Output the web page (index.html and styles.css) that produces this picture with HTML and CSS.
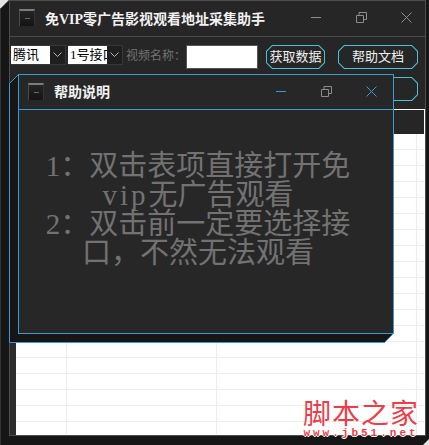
FILE: index.html
```html
<!DOCTYPE html>
<html lang="zh">
<head>
<meta charset="utf-8">
<title>免VIP零广告影视观看地址采集助手</title>
<link rel="stylesheet" href="styles.css">
</head>
<body>
<div class="app">
  <div class="panel">
    <div class="titlebar">
      <span class="appicon"><span class="appicon-dash"></span></span>
      <span class="title">免VIP零广告影视观看地址采集助手</span>
      <span class="controls">
        <svg width="11" height="11" viewBox="0 0 11 11"><path d="M0 5.5H10" stroke="#8c8c8c"/></svg>
        <svg width="11" height="11" viewBox="0 0 11 11" fill="none" stroke="#8c8c8c"><path d="M.5 3.5h7v7h-7zM3 3V.5h7.5v7H8"/></svg>
        <svg width="11" height="11" viewBox="0 0 11 11"><path d="M.5.5l10 10M10.5.5l-10 10" stroke="#8c8c8c"/></svg>
      </span>
    </div>
    <div class="toolbar">
      <div class="combo"><span class="combo-value">腾讯</span><span class="combo-arrow"><svg width="9" height="6" viewBox="0 0 9 6"><path d="M.5.5l4 4 4-4" fill="none" stroke="#b5b5b5"/></svg></span></div>
      <div class="combo"><span class="combo-value">1号接口</span><span class="combo-arrow"><svg width="9" height="6" viewBox="0 0 9 6"><path d="M.5.5l4 4 4-4" fill="none" stroke="#b5b5b5"/></svg></span></div>
      <span class="label">视频名称：</span>
      <span class="textbox"></span>
      <span class="btn btn-small"><span class="btn-face">获取数据</span></span>
      <span class="btn btn-wide"><span class="btn-face">帮助文档</span></span>
    </div>
    <div class="row2">
      <span class="btn btn-wide"><span class="btn-face"></span></span>
    </div>
    <div class="grid">
      <div class="grid-head"></div>
      <div class="grid-body"></div>
    </div>
  </div>

  <div class="mark">
    <div class="mark-cn">脚本之家</div>
    <div class="mark-en">www.jb51.net</div>
  </div>

  <div class="help">
    <svg class="help-bevel" width="385" height="269" viewBox="0 0 385 269"><path d="M.5 9.5l9-9h375v259l-9 9H.5z" fill="#161616" stroke="#3d9ad1"/></svg>
    <div class="help-window">
      <div class="help-titlebar">
        <span class="appicon"><span class="appicon-dash"></span></span>
        <span class="title">帮助说明</span>
        <span class="help-controls">
          <svg width="11" height="11" viewBox="0 0 11 11"><path d="M0 5.5H10" stroke="#3d9ad1"/></svg>
          <svg width="11" height="11" viewBox="0 0 11 11" fill="none" stroke="#8c8c8c"><path d="M.5 3.5h7v7h-7zM3 3V.5h7.5v7H8"/></svg>
          <svg width="11" height="11" viewBox="0 0 11 11"><path d="M.5.5l10 10M10.5.5l-10 10" stroke="#3d9ad1"/></svg>
        </span>
      </div>
      <div class="help-text">1：双击表项直接打开免<span class="latin">vip</span>无广告观看<br>2：双击前一定要选择接口，不然无法观看</div>
    </div>
  </div>
</div>
</body>
</html>
```
FILE: styles.css
```css
* { box-sizing: border-box; }
html, body { margin: 0; padding: 0; background: #e4e4e4; }
body { font-family: "Liberation Serif", "Noto Sans CJK SC", serif; }

.app {
  position: relative;
  width: 429px;
  height: 445px;
  padding: 0 3px 9px 8px;
  background: #161616;
  border-left: 1px solid #333;
  clip-path: polygon(9px 0, 429px 0, 429px 439px, 423px 445px, 0 445px, 0 9px);
}
.panel {
  height: 100%;
  display: flex;
  flex-direction: column;
  background: #2c2c2c;
  border: 1px solid #4d4d4d;
}
.titlebar {
  flex: none;
  height: 36px;
  display: flex;
  align-items: center;
  padding: 0 0 2px 9px;
  background: #262626;
  border-bottom: 1px solid #4a4a4a;
}
.appicon {
  flex: none;
  width: 16px;
  height: 17px;
  display: flex;
  align-items: center;
  justify-content: center;
  background: linear-gradient(#242424, #141414);
  border-top: 2px solid #7c7c7c;
  border-left: 1px solid #4a4a4a;
  border-right: 1px solid #333;
}
.appicon-dash { width: 5px; height: 1px; background: #6a6a6a; }
.title {
  margin-left: 10px;
  font-size: 14px;
  font-weight: 700;
  color: #f2f2f2;
  white-space: nowrap;
}
.controls {
  margin-left: auto;
  display: flex;
  gap: 34px;
  padding-right: 13px;
}
.toolbar {
  flex: none;
  height: 38px;
  display: flex;
  align-items: flex-start;
  padding: 8px 0 0 1px;
  background: #262626;
}
.combo {
  flex: none;
  width: 55px;
  height: 20px;
  margin-right: 2px;
  display: flex;
  border: 1px solid #383838;
  border-left: 0;
}
.combo-value {
  flex: none;
  width: 39px;
  background: #fff;
  color: #000;
  font-size: 13px;
  line-height: 18px;
  padding-left: 2px;
  overflow: hidden;
  white-space: nowrap;
}
.combo-arrow {
  flex: 1;
  display: flex;
  align-items: center;
  justify-content: center;
  background: #1f1f1f;
}
.label {
  margin-left: 1px;
  width: 60px;
  flex: none;
  font-size: 12px;
  line-height: 22px;
  color: #727272;
  white-space: nowrap;
}
.textbox {
  flex: none;
  width: 72px;
  height: 24px;
  background: #fff;
  border: 1px solid #555;
}
.btn {
  flex: none;
  display: block;
  height: 24px;
  padding: 1px;
  background: #46c3d8;
  clip-path: polygon(6px 0, calc(100% - 6px) 0, 100% 6px, 100% calc(100% - 6px), calc(100% - 6px) 100%, 6px 100%, 0 calc(100% - 6px), 0 6px);
}
.btn-face {
  display: block;
  height: 100%;
  background: #262626;
  color: #f0f0f0;
  font-size: 13px;
  line-height: 21px;
  text-align: center;
  clip-path: polygon(5.5px 0, calc(100% - 5.5px) 0, 100% 5.5px, 100% calc(100% - 5.5px), calc(100% - 5.5px) 100%, 5.5px 100%, 0 calc(100% - 5.5px), 0 5.5px);
}
.btn-small { width: 59px; margin-left: 8px; }
.btn-wide { width: 80px; margin-left: 13px; }
.row2 {
  flex: none;
  height: 34px;
  padding: 2px 7px 0 0;
  display: flex;
  justify-content: flex-end;
  background: #262626;
}
.grid {
  flex: 1;
  min-height: 0;
  margin-left: 6px;
  display: flex;
  flex-direction: column;
  background: #fff;
  border: 1px solid #fff;
  border-left: 0;
}
.grid-head { flex: none; height: 24px; background: #262626; }
.grid-body {
  flex: 1;
  background-color: #fff;
  background-image:
    repeating-linear-gradient(to bottom, transparent 0, transparent 15px, #ececec 15px, #ececec 16px),
    linear-gradient(#ececec, #ececec),
    linear-gradient(#ececec, #ececec),
    linear-gradient(#ececec, #ececec);
  background-size: 100% 100%, 1px 100%, 1px 100%, 1px 100%;
  background-position: 0 0, 50px 0, 200px 0, 400px 0;
  background-repeat: no-repeat;
}
.mark {
  position: absolute;
  left: 302px;
  top: 397px;
  width: 116px;
  color: #ea3f4b;
  text-align: center;
}
.mark-cn {
  font-family: "Noto Sans CJK SC", sans-serif;
  font-size: 28px;
  line-height: 31px;
  letter-spacing: 1px;
  white-space: nowrap;
}
.mark-en {
  font-family: "Liberation Mono", monospace;
  font-size: 11px;
  font-weight: 700;
  line-height: 10px;
  letter-spacing: 3px;
  white-space: nowrap;
  text-shadow: 1px 0 #fff, -1px 0 #fff, 0 1px #fff, 0 -1px #fff;
}
.help {
  position: absolute;
  left: 8px;
  top: 74px;
  width: 385px;
  height: 269px;
  padding: 0 0 9px 9px;
}
.help-bevel { position: absolute; left: 0; top: 0; }
.help-window {
  position: relative;
  height: 100%;
  background: #272727;
  border: 1px solid #3d9ad1;
}
.help-titlebar {
  height: 35px;
  display: flex;
  align-items: center;
  padding: 0 0 2px 9px;
  border-bottom: 1px solid #3d9ad1;
}
.help-controls {
  margin-left: auto;
  display: flex;
  gap: 34px;
  padding-right: 16px;
}
.help-text {
  width: 320px;
  margin: 42px 0 0 19px;
  color: #727272;
  font-size: 29px;
  line-height: 29px;
  text-align: center;
}
.latin { letter-spacing: 3px; }
```
